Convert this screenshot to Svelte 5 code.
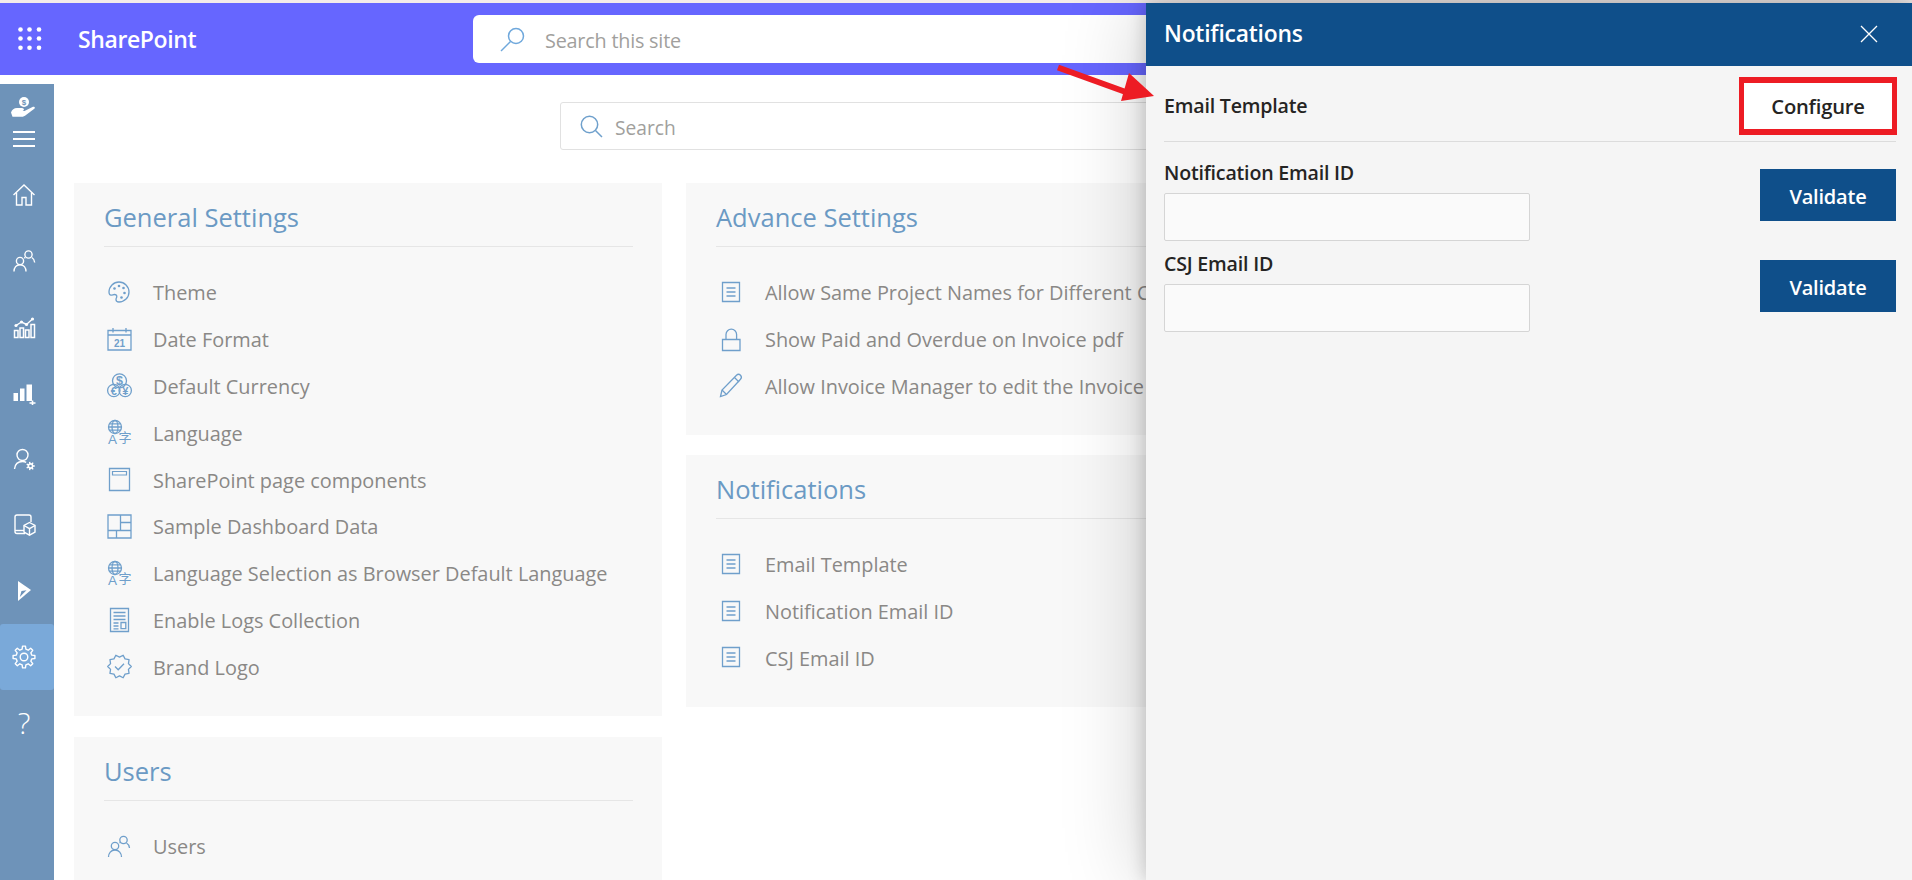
<script>
  function cog(cx, cy, r1, r2, n) {
    let d = '';
    const step = (Math.PI * 2) / n;
    for (let i = 0; i < n; i++) {
      const a = i * step;
      const pts = [[r1, a - step * 0.3], [r2, a - step * 0.17], [r2, a + step * 0.17], [r1, a + step * 0.3]];
      for (const [r, t] of pts) {
        d += (d ? 'L' : 'M') + (cx + r * Math.cos(t)).toFixed(2) + ' ' + (cy + r * Math.sin(t)).toFixed(2);
      }
    }
    return d + 'Z';
  }
  function badge(cx, cy, r1, r2, n) {
    let d = '';
    for (let i = 0; i < n * 2; i++) {
      const r = i % 2 ? r1 : r2;
      const t = (i * Math.PI) / n;
      d += (d ? 'L' : 'M') + (cx + r * Math.cos(t)).toFixed(2) + ' ' + (cy + r * Math.sin(t)).toFixed(2);
    }
    return d + 'Z';
  }
  const T = 'font-family="Liberation Sans, sans-serif"';
  const lang = `<circle cx="8" cy="7" r="6.500"/><ellipse cx="8" cy="7" rx="3" ry="6.500"/><path d="M1.500 7h13M2.500 3.800h11M2.500 10.200h11"/><text x="1" y="24" font-size="13.500" ${T} fill="currentColor" stroke="none">A</text><text x="11.500" y="21.500" font-size="13" font-family="Noto Sans CJK SC, sans-serif" fill="currentColor" stroke="none">字</text>`;
  const doc = `<path d="M3.500 2.500h17v19h-17z"/><path d="M7.500 8h9M7.500 12h9M7.500 16h9"/>`;
  const users = `<circle cx="16.500" cy="6" r="3.700"/><circle cx="8" cy="12" r="3.700"/><path d="M19.500 9c1.800 1 2.800 2.800 3 5M13.500 9c-.4-.3-.8-.5-1-.6M1.500 23c0-3.800 2.500-7 6.500-7s6.500 3.200 6.500 7"/>`;
  const icons = {
    palette: `<path d="M12 2a10 10 0 0 1 0 20c-2 0-3-1-3-2.500 0-1.500.8-2 .8-3 0-1.400-1.200-2-2.500-2-1 0-2 .6-3.500.6C3 15.100 2 14 2 12 2 6.500 6.500 2 12 2z"/><g fill="currentColor" stroke="none"><circle cx="7.500" cy="8.500" r="1.300"/><circle cx="12" cy="6" r="1.300"/><circle cx="16.500" cy="8" r="1.300"/><circle cx="17.500" cy="13" r="1.300"/><circle cx="14.500" cy="17.500" r="1.300"/></g>`,
    calendar: `<path d="M1 3.500h23v19.500H1z"/><path d="M1 8h23M6 1v4.500M19 1v4.500"/><text x="12.500" y="20" text-anchor="middle" font-size="10" font-weight="700" ${T} fill="currentColor" stroke="none">21</text>`,
    currency: `<circle cx="12.500" cy="7.800" r="7"/><circle cx="6.800" cy="17.500" r="6.200"/><circle cx="18.200" cy="17.500" r="6.200"/><text x="12.500" y="12.300" text-anchor="middle" font-size="12.500" font-weight="700" ${T} fill="currentColor" stroke="none">$</text><text x="6.800" y="21.500" text-anchor="middle" font-size="11" font-weight="700" ${T} fill="currentColor" stroke="none">€</text><text x="18.200" y="21.500" text-anchor="middle" font-size="11" font-weight="700" ${T} fill="currentColor" stroke="none">¥</text>`,
    lang,
    page: `<path d="M2.500 1.500h20v22h-20z"/><path d="M5.500 4.500h14v3.500h-14z" stroke-width="1.200"/>`,
    dash: `<path d="M1 1h23v23H1z"/><path d="M1 16.500h23M13.500 1v15.500M13.500 8.500h10.500M9.500 16.500V24"/>`,
    logs: `<path d="M3.500 1.500h18v23h-18z"/><path d="M6.500 5.500h12M6.500 9h12M6.500 12.500h12M6.500 16h5M6.500 19h5M6.500 21.800h5"/><path d="M14 15.500h4.800v6.200H14z"/>`,
    brand: `<path d="${badge(12.500, 12.500, 9.400, 11.800, 10)}" stroke-linejoin="round"/><path d="M8 12.500l3.200 3.200 5.800-6"/>`,
    users,
    doc,
    lock: `<path d="M3.500 12.500h17.500v11H3.500z"/><path d="M7 12.500V7.500a5.300 5.300 0 0 1 10.600 0v5"/>`,
    pencil: `<path d="M1.500 23.500l1.500-6.500L17.500 2.200c1.200-1.100 2.800-1.100 4 0 1.100 1.200 1.100 2.800 0 4L7.500 21.500z"/><path d="M3 17l4.500 4.500M15.500 4.500l4.500 4.500"/>`
  };
  const side = [
    { h: `<path d="M1.500 12 12 2l10.500 10"/><path d="M4.500 9.500V22h5.500v-7.500h4V22h5.500V9.500"/>` },
    { h: `<circle cx="16.500" cy="5.500" r="3.600"/><circle cx="8" cy="12" r="3.600"/><path d="M19.800 8.500c1.800 1 2.700 2.700 2.900 5M13.300 8.500c-.4.200-.7.400-1 .6M2 22.500c0-3.800 2.200-6.800 6-6.800s6 3 6 6.800"/>` },
    { h: `<path d="M2.500 15.500h3.500v7H2.500zM8 13h3.500v9.500H8zM13.500 15h3.500v7.500h-3.500zM19 9.500h3.500v13H19z" stroke-width="1.500"/><path d="M4 10.500l5.500-3.500 5 2.500 6-5.500"/><g fill="currentColor" stroke="none"><circle cx="4" cy="10.500" r="1.600"/><circle cx="9.500" cy="7" r="1.600"/><circle cx="14.500" cy="9.500" r="1.600"/><circle cx="20.500" cy="4" r="1.600"/></g>` },
    { h: `<g fill="currentColor" stroke="none"><path d="M1.500 12H6v8H1.500zM8 7.500h4.500V20H8zM14.500 3.500h5.500V20h-5.500z"/></g><path d="M20.500 19.500v5M17.500 22h6" stroke-width="1.600"/>` },
    { h: `<circle cx="10.500" cy="8" r="5.500"/><path d="M2.500 22c.5-4.800 3.500-7.500 8-7.500 1.500 0 2.700.3 3.700.8"/><path d="${cog(18.500, 19, 2.900, 4.300, 7)}" fill="currentColor" stroke="none"/><circle cx="18.500" cy="19" r="1.300" fill="#6e93b9" stroke="none"/>` },
    { h: `<path d="M13 20.500H5c-1 0-2-.8-2-2V4c0-1 1-2 2-2h12c1 0 2 1 2 2v5"/><path d="M3 17.500h9"/><path d="M17.500 9.500l5.500 3v6.500l-5.500 3.200-5.500-3.200v-6.500z"/><path d="M12 12.500l5.500 3.200 5.500-3.200M17.500 15.700v6.500"/>` },
    { h: `<path d="M6 2l13 9-13 11z" fill="currentColor" stroke="none"/><path d="M9.500 12l5-.8L7.800 18z" fill="#6e93b9" stroke="none"/>` },
    { h: `<path d="${cog(12, 12, 8, 11, 8)}" stroke-linejoin="round"/><circle cx="12" cy="12" r="3.800"/>`, active: true },
    { q: true }
  ];
  const general = [
    ['palette', 'Theme'], ['calendar', 'Date Format'], ['currency', 'Default Currency'], ['lang', 'Language'],
    ['page', 'SharePoint page components'], ['dash', 'Sample Dashboard Data'],
    ['lang', 'Language Selection as Browser Default Language'], ['logs', 'Enable Logs Collection'], ['brand', 'Brand Logo']
  ];
  const advance = [
    ['doc', 'Allow Same Project Names for Different Clients'], ['lock', 'Show Paid and Overdue on Invoice pdf'],
    ['pencil', 'Allow Invoice Manager to edit the Invoice']
  ];
  const notif = [['doc', 'Email Template'], ['doc', 'Notification Email ID'], ['doc', 'CSJ Email ID']];
  const cols = [
    [{ title: 'General Settings', items: general }, { title: 'Users', items: [['users', 'Users']] }],
    [{ title: 'Advance Settings', items: advance }, { title: 'Notifications', items: notif }]
  ];
  const fields = ['Notification Email ID', 'CSJ Email ID'];
</script>

<div class="page">
  <div class="strip"></div>
  <header class="bar">
    <svg class="waffle" width="24" height="24" viewBox="0 0 24 24" fill="#fff">
      {#each [2.5, 11.5, 20.800] as y}
        {#each [2.500, 11.500, 21] as x}
          <circle cx={x} cy={y} r="2.300" />
        {/each}
      {/each}
    </svg>
    <div class="brandname">SharePoint</div>
    <div class="sitesearch">
      <svg width="25" height="25" viewBox="0 0 25 25" fill="none" stroke="#6fa8dc" stroke-width="1.500">
        <circle cx="16" cy="9" r="7.500" /><path d="M10.500 14.500 1 24" />
      </svg>
      <span>Search this site</span>
    </div>
  </header>

  <div class="body">
    <nav class="rail">
      <div class="logo">
        <svg width="26" height="20" viewBox="0 0 26 20">
          <circle cx="13" cy="5" r="5" fill="#fff" />
          <text x="13" y="8" text-anchor="middle" font-size="8" font-weight="700" font-family="Liberation Sans, sans-serif" fill="#6e93b9">$</text>
          <path fill="#fff" d="M0 15.500c1-3 3-4.500 6-4.500h5c2.200 0 2.700 2.600.5 2.900H8.500h5l8-4c1.700-.8 3.300.8 1.800 1.900L14 18.700c-2 1.100-4 1.400-6 1H1.500z" />
        </svg>
        <div class="ham"><i></i><i></i><i></i></div>
      </div>
      {#each side as s}
        <div class="railitem" class:active={s.active}>
          {#if s.q}
            <span class="q">?</span>
          {:else}
            <svg width="24" height="24" viewBox="0 0 24 24" fill="none" stroke="currentColor" stroke-width="1.400">{@html s.h}</svg>
          {/if}
        </div>
      {/each}
    </nav>

    <main class="main">
      <div class="search">
        <svg width="23" height="23" viewBox="0 0 23 23" fill="none" stroke="#6fa0cc" stroke-width="1.500">
          <circle cx="9.500" cy="9.500" r="8.200" /><path d="M15.500 15.500 22 22" />
        </svg>
        <span>Search</span>
      </div>
      <div class="columns">
        {#each cols as col}
          <div class="col">
            {#each col as card}
              <section class="card">
                <h2>{card.title}</h2>
                <ul>
                  {#each card.items as [ic, label]}
                    <li>
                      <svg class="ic" width="25" height="25" viewBox="0 0 25 25" fill="none" stroke="currentColor" stroke-width="1.300">{@html icons[ic]}</svg>
                      <span>{label}</span>
                    </li>
                  {/each}
                </ul>
              </section>
            {/each}
          </div>
        {/each}
      </div>
    </main>
  </div>

  <aside class="panel">
    <div class="phead">
      <span>Notifications</span>
      <svg width="18" height="18" viewBox="0 0 18 18" stroke="#fff" stroke-width="1.300"><path d="M1 1l16 16M17 1 1 17" /></svg>
    </div>
    <div class="pbody">
      <div class="prow">
        <span class="lbl">Email Template</span>
        <button class="configure">Configure</button>
      </div>
      {#each fields as f}
        <div class="field">
          <div class="fcol">
            <label class="lbl" for={f}>{f}</label>
            <input id={f} type="text" />
          </div>
          <button class="validate">Validate</button>
        </div>
      {/each}
    </div>
  </aside>

  <svg class="arrow" width="110" height="50" viewBox="0 0 110 50">
    <path d="M2 3.500 78 31" stroke="#ed1c24" stroke-width="6" />
    <path d="M73 9 98 32 65 37z" fill="#ed1c24" />
  </svg>
</div>

<style>
  :global(body) { margin: 0; background: #fff; }
  * { box-sizing: border-box; }
  .page {
    position: relative; width: 1912px; height: 880px; overflow: hidden; background: #fff;
    font-family: "Open Sans", "Noto Sans", sans-serif;
  }
  .strip { height: 3px; background: #f3ecea; }
  .bar { height: 72px; background: #6666ff; display: flex; align-items: center; padding-left: 18px; }
  .waffle { flex: none; }
  .brandname { color: #fff; font-size: 23px; font-weight: 600; margin-left: 36px; width: 395px; letter-spacing: -0.4px; }
  .sitesearch {
    flex: 1; height: 48px; background: #fff; border-radius: 6px 0 0 6px; display: flex; align-items: center;
    padding-left: 27px; gap: 20px; color: #a19f9d; font-size: 19.800px; letter-spacing: -0.2px;
  }
  .sitesearch span, .search span { padding-top: 2px; }
  .body { display: flex; margin-top: 9px; height: 796px; }
  .rail { width: 54px; flex: none; background: #6e93b9; color: #fff; display: flex; flex-direction: column; }
  .logo { height: 78px; display: flex; flex-direction: column; align-items: center; padding: 13px 6px 0 0; }
  .ham { margin-top: 14px; width: 22px; display: flex; flex-direction: column; gap: 5.500px; }
  .ham i { display: block; height: 1.500px; background: #fff; }
  .railitem { height: 66px; display: flex; align-items: center; justify-content: center; padding-right: 6px; border-radius: 3px; }
  .railitem.active { background: #7aa9d9; }
  .q { font-size: 30px; font-weight: 300; line-height: 1; }
  .main { flex: 1; padding: 18px 0 0 20px; min-width: 0; }
  .search {
    margin-left: 486px; width: 900px; height: 48px; border: 1px solid #e1e1e1; border-radius: 3px;
    display: flex; align-items: center; padding-left: 19px; gap: 12px; color: #a19f9d; font-size: 19.200px;
  }
  .columns { display: flex; gap: 24px; margin-top: 33px; align-items: flex-start; }
  .col { width: 588px; flex: none; display: flex; flex-direction: column; gap: 20.500px; }
  .col:last-child { width: 640px; gap: 19.500px; }
  .card { background: #f8f8f8; padding: 0 29px 26px 30px; }
  h2 {
    margin: 0; height: 64px; border-bottom: 1px solid #e6e6e6; color: #6b9ac4; font-size: 25.500px; font-weight: 400;
    line-height: 68px;
  }
  ul { list-style: none; margin: 0; padding: 22px 0 0; }
  li { height: 46.800px; display: flex; align-items: center; color: #8a8886; font-size: 19.900px; white-space: nowrap; }
  li span { padding-top: 1px; }
  .ic { flex: none; margin-left: 3px; margin-right: 21px; color: #6f9fcb; overflow: visible; }
  .panel {
    position: absolute; left: 1146px; top: 3px; bottom: 0; width: 766px; background: #f5f5f5;
    box-shadow: 0 0 80px rgba(0, 0, 0, 0.2), 0 0 18px rgba(0, 0, 0, 0.2);
    display: flex; flex-direction: column;
  }
  .phead {
    height: 63px; background: #0f4f8a; color: #fff; font-size: 22.800px; font-weight: 600; flex: none;
    display: flex; align-items: center; justify-content: space-between; padding: 0 34px 2px 18px; letter-spacing: -0.2px;
  }
  .pbody { padding: 0 16px 0 18px; }
  .prow {
    display: flex; align-items: center; justify-content: space-between; padding: 11px 0 6px;
    border-bottom: 1px solid #dcdcdc;
  }
  .lbl { display: block; color: #252423; font-size: 19.600px; font-weight: 600; letter-spacing: -0.2px; line-height: 24px; }
  .configure {
    width: 158px; height: 58px; margin-right: -1px; background: #fff; border: solid #ed1c24; border-width: 6px 5px;
    color: #252423; font: 600 20.200px "Open Sans", sans-serif; letter-spacing: -0.2px; padding: 0;
  }
  .field { display: flex; justify-content: space-between; align-items: flex-start; margin-top: 19px; }
  .field + .field { margin-top: 11px; }
  .fcol { width: 366px; display: flex; flex-direction: column; gap: 8px; }
  input { height: 48px; width: 100%; background: #fafafa; border: 1px solid #d5d5d5; border-radius: 2px; padding: 0 8px; }
  .validate {
    width: 136px; height: 52px; margin-top: 8px; background: #0f4f8a; border: 0; color: #fff;
    font: 600 20px "Open Sans", sans-serif; letter-spacing: -0.2px; padding: 2px 0 0;
  }
  .arrow { position: absolute; left: 1056px; top: 64px; }
</style>
